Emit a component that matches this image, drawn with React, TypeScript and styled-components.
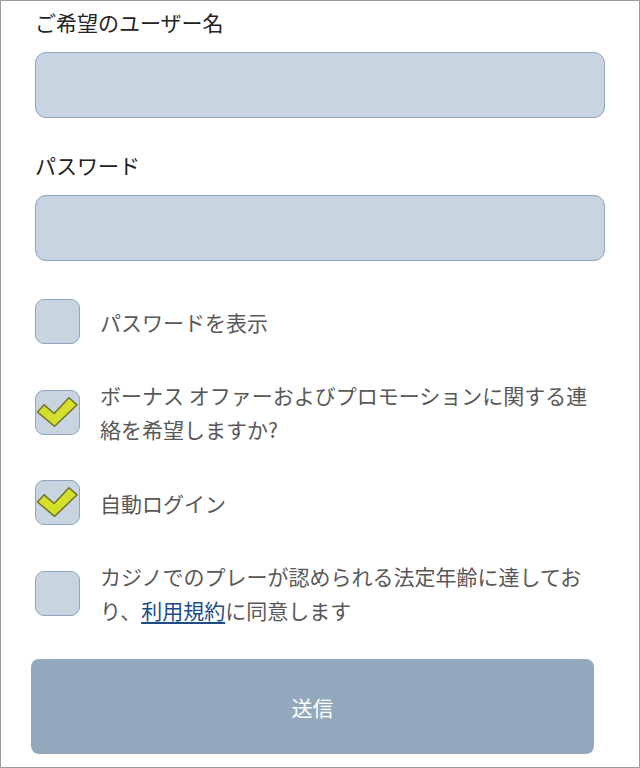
import styled, { createGlobalStyle } from "styled-components";

const GlobalStyle = createGlobalStyle`
  html, body {
    margin: 0;
    padding: 0;
    background: #ffffff;
  }
  * {
    box-sizing: border-box;
  }
`;

const Frame = styled.div`
  width: 640px;
  height: 768px;
  border: 1px solid #9a9a9a;
  background: #ffffff;
  padding: 7px 34px 0 34px;
  font-family: "Noto Sans CJK JP", "Noto Sans", sans-serif;
  display: flex;
  flex-direction: column;
`;

const Field = styled.div`
  display: flex;
  flex-direction: column;
  gap: 16px;
  margin-bottom: 33px;
`;

const Label = styled.label`
  font-size: 21px;
  line-height: 28px;
  color: #222222;
`;

const Input = styled.input`
  width: 100%;
  height: 66px;
  border: 1.5px solid #8ea4c1;
  border-radius: 11px;
  background: #c8d4e0;
  outline: none;
`;

const Options = styled.div`
  display: flex;
  flex-direction: column;
  gap: 34px;
  margin-top: 5px;
`;

const OptionRow = styled.label`
  display: flex;
  align-items: center;
  gap: 20px;
`;

const Box = styled.span`
  flex: 0 0 45px;
  width: 45px;
  height: 45px;
  border: 1.5px solid #8ea4c1;
  border-radius: 9px;
  background: #c8d4e0;
  display: flex;
  align-items: center;
  justify-content: center;
`;

const OptionText = styled.span`
  font-size: 21px;
  line-height: 34px;
  color: #585858;
`;

const TermsLink = styled.a`
  color: #1d4c85;
  text-decoration: underline;
  text-underline-offset: 3px;
`;

const SubmitButton = styled.button`
  margin: 32px 0 0 -4px;
  width: 563px;
  height: 95px;
  border: none;
  border-radius: 8px;
  background: #93a8bd;
  color: #ffffff;
  font-family: inherit;
  font-size: 21px;
`;

function Check() {
  return (
    <svg width="45" height="45" viewBox="0 0 45 45">
      <path
        d="M1.5 22 L8.5 14.5 L19 23.5 L34.5 7 L43 14.5 L19.5 37 Z"
        fill="#d4df2c"
        stroke="#6c7226"
        strokeWidth="1.5"
        strokeLinejoin="round"
      />
    </svg>
  );
}

function Option({ checked, children }: { checked?: boolean; children: React.ReactNode }) {
  return (
    <OptionRow>
      <Box>{checked && <Check />}</Box>
      <OptionText>{children}</OptionText>
    </OptionRow>
  );
}

export default function App() {
  return (
    <>
      <GlobalStyle />
      <Frame>
        <Field>
          <Label>ご希望のユーザー名</Label>
          <Input type="text" />
        </Field>
        <Field>
          <Label>パスワード</Label>
          <Input type="password" />
        </Field>
        <Options>
          <Option>パスワードを表示</Option>
          <Option checked>ボーナス オファーおよびプロモーションに関する連絡を希望しますか?</Option>
          <Option checked>自動ログイン</Option>
          <Option>
            カジノでのプレーが認められる法定年齢に達しており、<TermsLink>利用規約</TermsLink>に同意します
          </Option>
        </Options>
        <SubmitButton>送信</SubmitButton>
      </Frame>
    </>
  );
}
